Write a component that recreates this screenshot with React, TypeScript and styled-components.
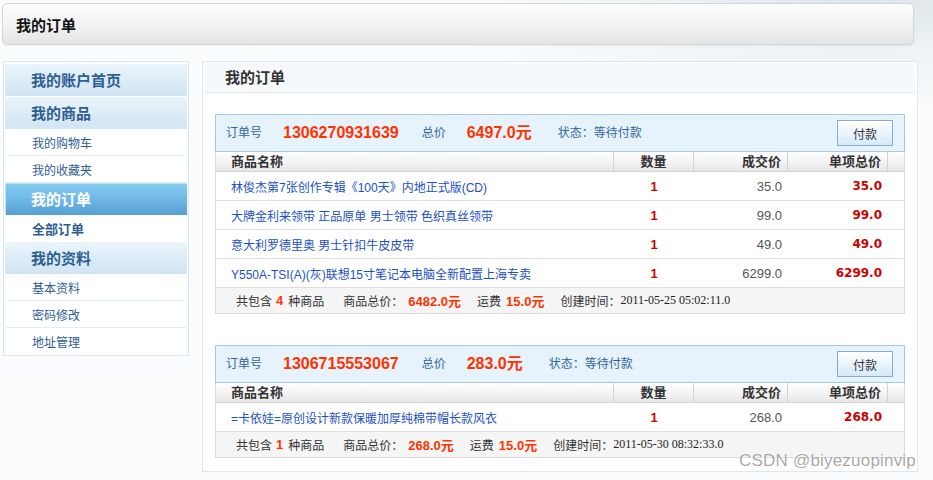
import React from "react";
import styled, { createGlobalStyle } from "styled-components";

const FONT = `"Liberation Sans", "Noto Sans CJK SC", sans-serif`;

const Global = createGlobalStyle`
  html, body { margin: 0; padding: 0; }
  body {
    font-family: ${FONT};
    font-size: 12px;
    color: #333;
    background: radial-gradient(ellipse 420px 120px at 860px 0px, #dbe5ea 0%, #eef3f5 45%, #fbfcfd 100%) no-repeat, #fbfcfd;
    min-height: 480px;
  }
`;

const Page = styled.div`
  position: relative;
  padding: 3px 0 0 2px;
  width: 933px;
  height: 480px;
  box-sizing: border-box;
`;

const TopBar = styled.div`
  width: 912px;
  height: 42px;
  box-sizing: border-box;
  border: 1px solid #d4d6d8;
  border-radius: 5px;
  background: linear-gradient(#fdfdfd 0%, #f3f3f3 50%, #e3e4e4 100%);
  box-shadow: 0 1px 2px rgba(0, 0, 0, 0.06);
  display: flex;
  align-items: center;
  padding: 3px 0 0 13px;
`;

const TopTitle = styled.h1`
  margin: 0;
  font-size: 15px;
  font-weight: bold;
  color: #111;
  line-height: 20px;
`;

const Body = styled.div`
  display: flex;
  align-items: flex-start;
  gap: 13px;
  margin-top: 16px;
  padding-left: 1px;
`;

const Sidebar = styled.nav`
  width: 186px;
  box-sizing: border-box;
  border: 1px solid #d6e5f1;
  background: #fff;
  padding: 2px 1px 0 1px;
`;

const SideHead = styled.div<{ $active?: boolean; $gap?: boolean }>`
  height: 32px;
  box-sizing: border-box;
  margin-top: ${(p) => (p.$gap ? "1px" : "0")};
  display: flex;
  align-items: center;
  padding: 0 0 2px 26px;
  font-size: 15px;
  font-weight: bold;
  color: ${(p) => (p.$active ? "#fff" : "#2d5e92")};
  background: ${(p) =>
    p.$active
      ? "linear-gradient(#86cdf2 0%, #70b8e6 50%, #559fd2 100%)"
      : "linear-gradient(#eaf5fc 0%, #dcecf7 50%, #d2e5f3 100%)"};
  box-shadow: ${(p) => (p.$active ? "inset 1px 1px 0 #b7e1f7" : "none")};
`;

const SideItem = styled.div<{ $bold?: boolean; $last?: boolean }>`
  height: 26px;
  margin: 0 1px;
  border-bottom: 1px solid ${(p) => (p.$last ? "transparent" : "#e3edf5")};
  display: flex;
  align-items: center;
  padding-left: 26px;
  font-size: ${(p) => (p.$bold ? "13px" : "12px")};
  font-weight: ${(p) => (p.$bold ? "bold" : "normal")};
  color: #2d5e92;
`;

const Main = styled.main`
  width: 716px;
  box-sizing: border-box;
  border: 1px solid #dce8f1;
  background: #fff;
  padding: 1px 2px 13px 2px;
`;

const MainTitle = styled.div`
  height: 30px;
  box-sizing: border-box;
  border-bottom: 1px solid #e4ebf1;
  background: #f5f9fc;
  display: flex;
  align-items: center;
  padding: 0 0 3px 20px;
  font-size: 15px;
  font-weight: bold;
  color: #333;
`;

const OrderBox = styled.section<{ $first?: boolean }>`
  margin: ${(p) => (p.$first ? "21px" : "31px")} 10px 0 10px;
`;

const OrderHead = styled.div`
  height: 36px;
  border: 1px solid #a9c8e6;
  background: #e6f2fc;
  display: flex;
  align-items: center;
  padding: 0 11px 0 10px;
`;

const HeadLabel = styled.span<{ $mr: number }>`
  font-size: 12px;
  color: #336699;
  margin-right: ${(p) => p.$mr}px;
  line-height: 16px;
`;

const HeadNum = styled.span<{ $mr: number }>`
  font-size: 16px;
  font-weight: bold;
  color: #ff3300;
  margin-right: ${(p) => p.$mr}px;
  line-height: 18px;
`;

const PayButton = styled.button`
  margin-left: auto;
  width: 56px;
  height: 26px;
  border: 1px solid #89aacb;
  background: linear-gradient(#ffffff 0%, #eef6fd 40%, #d6e9f9 100%);
  font-family: ${FONT};
  font-size: 12px;
  color: #333;
  padding: 0;
  cursor: pointer;
`;

const Table = styled.div`
  border: 1px solid #dadada;
  border-top: none;
`;

const GridRow = styled.div`
  display: grid;
  grid-template-columns: 398px 80px 94px 100px 1fr;
`;

const THead = styled(GridRow)`
  height: 19px;
  background: linear-gradient(#ffffff 0%, #f4f4f4 50%, #e6e6e6 100%);
  border-bottom: 1px solid #d4d4d4;
`;

const TH = styled.div<{ $align: "left" | "center" | "right"; $noBorder?: boolean }>`
  font-size: 13px;
  font-weight: bold;
  color: #333;
  line-height: 19px;
  text-align: ${(p) => p.$align};
  padding: ${(p) => (p.$align === "left" ? "0 0 0 15px" : p.$align === "right" ? "0 6px 0 0" : "0")};
  border-right: ${(p) => (p.$noBorder ? "none" : "1px solid #d2d2d2")};
`;

const TRow = styled(GridRow)`
  height: 28px;
  border-bottom: 1px solid #dedede;
  align-items: center;
`;

const NameCell = styled.div`
  padding-left: 15px;
  font-size: 12px;
  color: #1b4fc6;
  white-space: pre;
`;

const QtyCell = styled.div`
  text-align: center;
  font-size: 13px;
  font-weight: bold;
  color: #cc0000;
`;

const PriceCell = styled.div`
  text-align: right;
  padding-right: 6px;
  font-size: 13px;
  color: #555;
`;

const SumCell = styled.div`
  text-align: right;
  padding-right: 6px;
  font-family: "DejaVu Sans", "Liberation Sans", sans-serif;
  font-size: 12px;
  font-weight: bold;
  color: #cc0000;
`;

const Summary = styled.div`
  height: 25px;
  background: #f5f5f5;
  display: flex;
  align-items: center;
  padding-left: 20px;
  font-size: 12px;
  color: #333;
`;

const SumText = styled.span<{ $mr?: number }>`
  margin-right: ${(p) => p.$mr ?? 0}px;
`;

const SumNum = styled.span<{ $mr?: number }>`
  font-size: 13px;
  font-weight: bold;
  color: #ff3300;
  margin-right: ${(p) => p.$mr ?? 0}px;
`;

const DateText = styled.span`
  font-family: "Liberation Serif", serif;
  font-size: 12px;
  color: #222;
`;

const Watermark = styled.div`
  position: absolute;
  right: 17px;
  bottom: 9px;
  font-family: "Liberation Sans", sans-serif;
  font-size: 17px;
  letter-spacing: 0.2px;
  color: rgba(130, 130, 130, 0.7);
  text-shadow: 0 0 2px #fff;
  pointer-events: none;
`;

type Item = { name: string; qty: number; price: string; sum: string };
type Order = {
  no: string;
  total: string;
  status: string;
  items: Item[];
  goods: string;
  ship: string;
  time: string;
};

const orders: Order[] = [
  {
    no: "1306270931639",
    total: "6497.0",
    status: "等待付款",
    items: [
      { name: "林俊杰第7张创作专辑《100天》内地正式版(CD)", qty: 1, price: "35.0", sum: "35.0" },
      { name: "大牌金利来领带 正品原单 男士领带 色织真丝领带", qty: 1, price: "99.0", sum: "99.0" },
      { name: "意大利罗德里奥 男士针扣牛皮皮带", qty: 1, price: "49.0", sum: "49.0" },
      { name: "Y550A-TSI(A)(灰)联想15寸笔记本电脑全新配置上海专卖", qty: 1, price: "6299.0", sum: "6299.0" },
    ],
    goods: "6482.0",
    ship: "15.0",
    time: "2011-05-25 05:02:11.0",
  },
  {
    no: "1306715553067",
    total: "283.0",
    status: "等待付款",
    items: [
      { name: "=卡依娃=原创设计新款保暖加厚纯棉带帽长款风衣", qty: 1, price: "268.0", sum: "268.0" },
    ],
    goods: "268.0",
    ship: "15.0",
    time: "2011-05-30 08:32:33.0",
  },
];

function OrderCard({ order, first }: { order: Order; first?: boolean }) {
  return (
    <OrderBox $first={first}>
      <OrderHead>
        <HeadLabel $mr={21}>订单号</HeadLabel>
        <HeadNum $mr={23}>{order.no}</HeadNum>
        <HeadLabel $mr={21}>总价</HeadLabel>
        <HeadNum $mr={26}>
          {order.total}元
        </HeadNum>
        <HeadLabel $mr={0}>状态：{order.status}</HeadLabel>
        <PayButton>付款</PayButton>
      </OrderHead>
      <Table>
        <THead>
          <TH $align="left">商品名称</TH>
          <TH $align="center">数量</TH>
          <TH $align="right">成交价</TH>
          <TH $align="right">单项总价</TH>
          <TH $align="left" $noBorder />
        </THead>
        {order.items.map((it) => (
          <TRow key={it.name}>
            <NameCell>{it.name}</NameCell>
            <QtyCell>{it.qty}</QtyCell>
            <PriceCell>{it.price}</PriceCell>
            <SumCell>{it.sum}</SumCell>
            <div />
          </TRow>
        ))}
        <Summary>
          <SumText $mr={4}>共包含</SumText>
          <SumNum $mr={5}>{order.items.length}</SumNum>
          <SumText $mr={19}>种商品</SumText>
          <SumText $mr={5}>商品总价：</SumText>
          <SumNum $mr={16}>{order.goods}元</SumNum>
          <SumText $mr={5}>运费</SumText>
          <SumNum $mr={16}>{order.ship}元</SumNum>
          <SumText>创建时间：</SumText>
          <DateText>{order.time}</DateText>
        </Summary>
      </Table>
    </OrderBox>
  );
}

export default function App() {
  return (
    <>
      <Global />
      <Page>
        <TopBar>
          <TopTitle>我的订单</TopTitle>
        </TopBar>
        <Body>
          <Sidebar>
            <SideHead>我的账户首页</SideHead>
            <SideHead $gap>我的商品</SideHead>
            <SideItem>我的购物车</SideItem>
            <SideItem>我的收藏夹</SideItem>
            <SideHead $active>我的订单</SideHead>
            <SideItem $bold $last>全部订单</SideItem>
            <SideHead>我的资料</SideHead>
            <SideItem>基本资料</SideItem>
            <SideItem>密码修改</SideItem>
            <SideItem $last>地址管理</SideItem>
          </Sidebar>
          <Main>
            <MainTitle>我的订单</MainTitle>
            {orders.map((o, i) => (
              <OrderCard key={o.no} order={o} first={i === 0} />
            ))}
          </Main>
        </Body>
        <Watermark>CSDN @biyezuopinvip</Watermark>
      </Page>
    </>
  );
}
